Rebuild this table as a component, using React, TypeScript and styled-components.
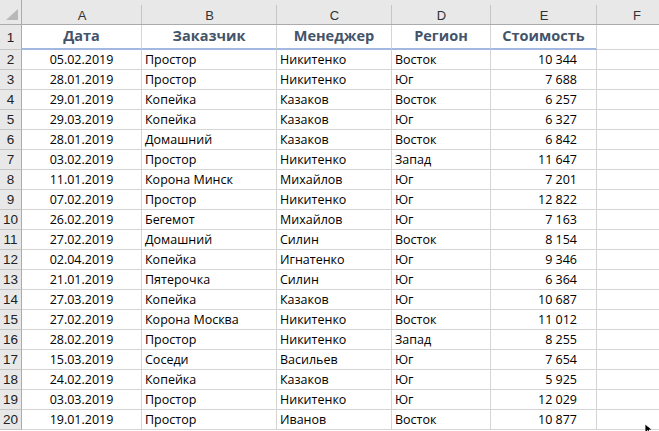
import React from "react";
import styled, { createGlobalStyle, css } from "styled-components";

const GlobalStyle = createGlobalStyle`
  html, body { margin: 0; padding: 0; background: #ffffff; overflow: hidden; }
  * { box-sizing: border-box; }
`;

const GRID = "#d4d4d4";
const HEAD_BG = "#e8e8e8";

const Sheet = styled.div`
  position: relative;
  display: grid;
  grid-template-columns: 22px 120px 135px 115px 99px 106px 80px;
  grid-template-rows: 25px 25px;
  grid-auto-rows: 20px;
  width: 659px;
  height: 431px;
  overflow: hidden;
  font-family: "Open Sans", "Liberation Sans", sans-serif;
  font-size: 12.5px;
  color: #000;
`;

const Corner = styled.div`
  position: relative;
  background: ${HEAD_BG};
  border-right: 1px solid #ababab;
  border-bottom: 1px solid #ababab;
`;

const CornerTriangle = styled.svg`
  position: absolute;
  left: 6px;
  top: 9px;
`;

const ColHeader = styled.div`
  position: relative;
  background: ${HEAD_BG};
  border-bottom: 1px solid #ababab;
  display: flex;
  align-items: center;
  justify-content: center;
  padding-top: 6px;
  font-family: "Liberation Sans", sans-serif;
  font-size: 13px;
  color: #333;
  &::after {
    content: "";
    position: absolute;
    right: 0;
    top: 5px;
    bottom: 0;
    width: 1px;
    background: #c6c6c6;
  }
`;

const RowHeader = styled.div`
  background: ${HEAD_BG};
  border-right: 1px solid #ababab;
  border-bottom: 1px solid #c6c6c6;
  display: flex;
  align-items: center;
  justify-content: center;
  font-family: "Liberation Sans", sans-serif;
  font-size: 13.5px;
  color: #222;
`;

type Align = "left" | "center" | "right";

const Cell = styled.div<{ $align?: Align; $title?: boolean }>`
  border-right: 1px solid ${GRID};
  border-bottom: 1px solid ${GRID};
  display: flex;
  align-items: center;
  white-space: nowrap;
  overflow: hidden;
  padding: 0 3px;
  justify-content: ${(p) =>
    p.$align === "center" ? "center" : p.$align === "right" ? "flex-end" : "flex-start"};
  ${(p) => p.$align === "right" && css`padding-right: 19px;`}
  ${(p) =>
    p.$title &&
    css`
      border-bottom: 2px solid #a2b8e1;
      font-weight: 700;
      font-size: 14.5px;
      color: #44546a;
      padding-bottom: 2px;
    `}
`;

const Cursor = styled.svg`
  position: absolute;
  left: 644px;
  top: 423px;
`;

type Row = [string, string, string, string, string];

const rows: Row[] = [
  ["05.02.2019", "Простор", "Никитенко", "Восток", "10 344"],
  ["28.01.2019", "Простор", "Никитенко", "Юг", "7 688"],
  ["29.01.2019", "Копейка", "Казаков", "Восток", "6 257"],
  ["29.03.2019", "Копейка", "Казаков", "Юг", "6 327"],
  ["28.01.2019", "Домашний", "Казаков", "Восток", "6 842"],
  ["03.02.2019", "Простор", "Никитенко", "Запад", "11 647"],
  ["11.01.2019", "Корона Минск", "Михайлов", "Юг", "7 201"],
  ["07.02.2019", "Простор", "Никитенко", "Юг", "12 822"],
  ["26.02.2019", "Бегемот", "Михайлов", "Юг", "7 163"],
  ["27.02.2019", "Домашний", "Силин", "Восток", "8 154"],
  ["02.04.2019", "Копейка", "Игнатенко", "Юг", "9 346"],
  ["21.01.2019", "Пятерочка", "Силин", "Юг", "6 364"],
  ["27.03.2019", "Копейка", "Казаков", "Юг", "10 687"],
  ["27.02.2019", "Корона Москва", "Никитенко", "Восток", "11 012"],
  ["28.02.2019", "Простор", "Никитенко", "Запад", "8 255"],
  ["15.03.2019", "Соседи", "Васильев", "Юг", "7 654"],
  ["24.02.2019", "Копейка", "Казаков", "Юг", "5 925"],
  ["03.03.2019", "Простор", "Никитенко", "Юг", "12 029"],
  ["19.01.2019", "Простор", "Иванов", "Восток", "10 877"],
];

const letters = ["A", "B", "C", "D", "E", "F"];
const titles = ["Дата", "Заказчик", "Менеджер", "Регион", "Стоимость"];
const aligns: Align[] = ["center", "left", "left", "left", "right"];

export default function App() {
  return (
    <>
      <GlobalStyle />
      <Sheet>
        <Corner>
          <CornerTriangle width="12" height="11" viewBox="0 0 12 11">
            <polygon points="12,0 12,11 0,11" fill="#b8b8b8" />
          </CornerTriangle>
        </Corner>
        {letters.map((l) => (
          <ColHeader key={l}>{l}</ColHeader>
        ))}

        <RowHeader>1</RowHeader>
        {titles.map((t) => (
          <Cell key={t} $align="center" $title>
            {t}
          </Cell>
        ))}
        <Cell />

        {rows.map((r, i) => (
          <React.Fragment key={i}>
            <RowHeader>{i + 2}</RowHeader>
            {r.map((v, j) => (
              <Cell key={j} $align={aligns[j]}>
                {v}
              </Cell>
            ))}
            <Cell />
          </React.Fragment>
        ))}

        <Cursor width="10" height="12" viewBox="0 0 10 12">
          <path d="M1 1 L1 10 L3.5 7.5 L5.5 11.5 L7 10.8 L5 7 L8.5 7 Z" fill="#000" stroke="#fff" strokeWidth="0.8" />
        </Cursor>
      </Sheet>
    </>
  );
}
